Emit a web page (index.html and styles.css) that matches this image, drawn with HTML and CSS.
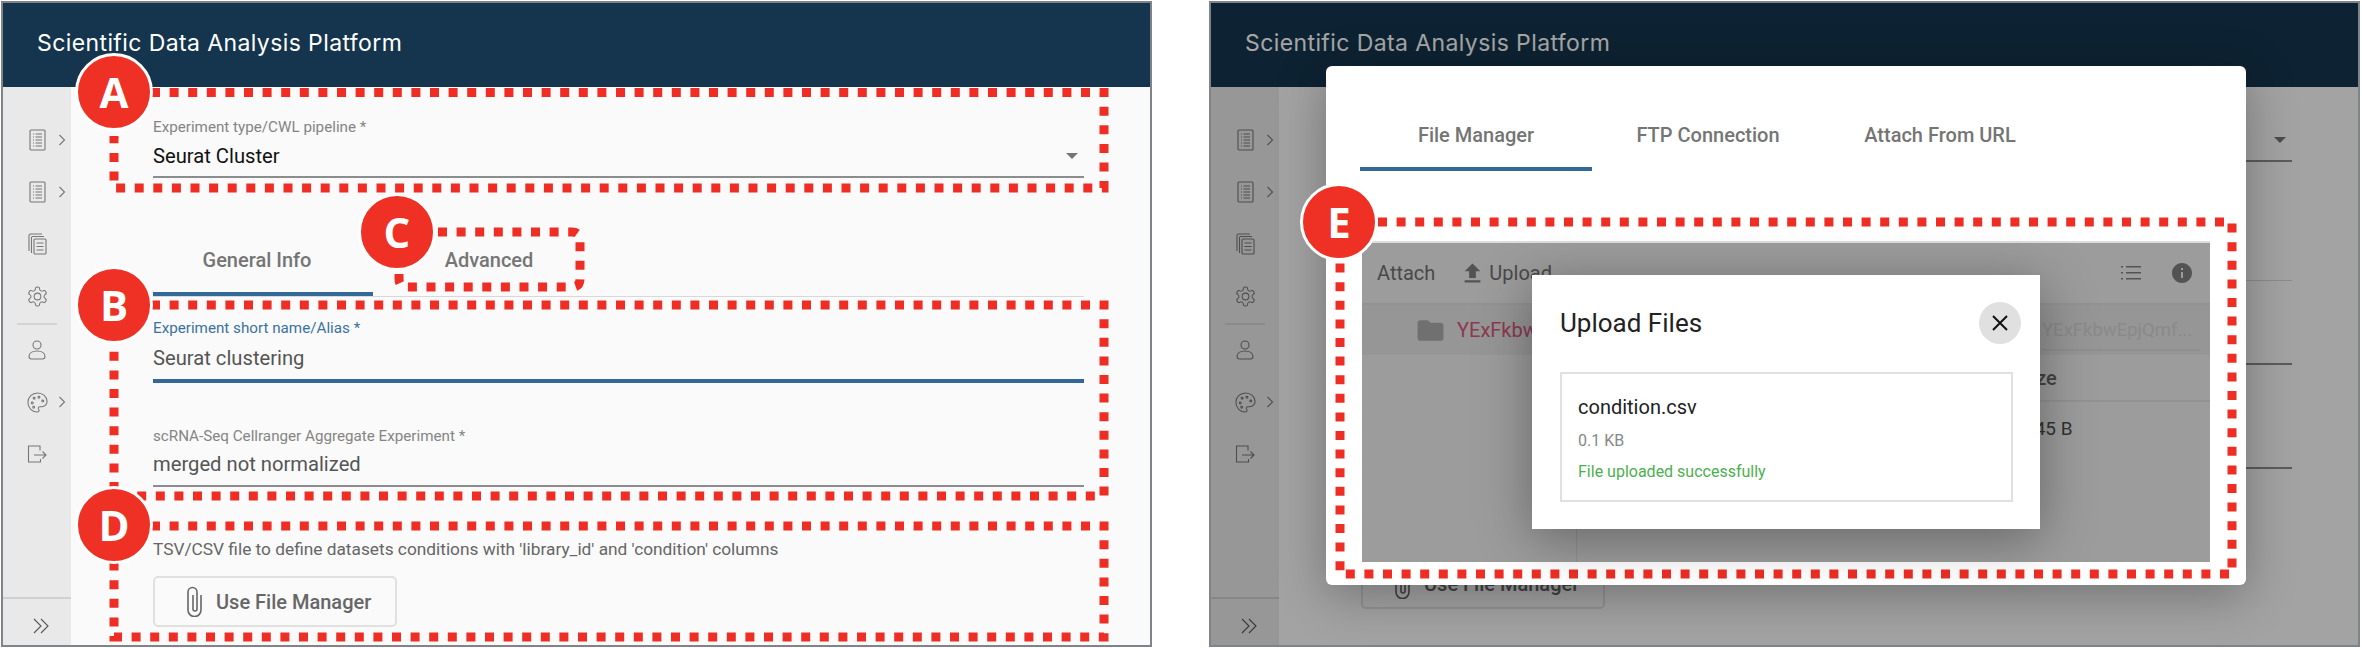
FILE: index.html
```html
<!DOCTYPE html>
<html lang="en">
<head>
  <meta charset="UTF-8">
  <title>Scientific Data Analysis Platform</title>
  <link rel="stylesheet" href="styles.css">
</head>
<body>

<!-- shared icons -->
<svg class="sprite" xmlns="http://www.w3.org/2000/svg">
  <symbol id="i-doc" viewBox="0 0 17 22">
    <rect x="1" y="1" width="15" height="20" rx="1"/>
    <path d="M4 5h1M4 8h1M4 11h1M4 14h1M4 17h1M6.500 5H13M6.500 8H13M6.500 11H13M6.500 14H13M6.500 17H13"/>
  </symbol>
  <symbol id="i-stack" viewBox="0 0 19 22">
    <path d="M1 18V2.500Q1 1 2.500 1H14"/>
    <path d="M3.500 20V4.500Q3.500 3.500 4.500 3.500H16"/>
    <rect x="6" y="6" width="12" height="15" rx="1"/>
    <path d="M8.500 10h7M8.500 13.500h7M8.500 17h7"/>
  </symbol>
  <symbol id="i-gear" viewBox="0 0 24 24">
    <path d="M12.220 2h-.44a2 2 0 0 0-2 2v.18a2 2 0 0 1-1 1.730l-.43.25a2 2 0 0 1-2 0l-.15-.08a2 2 0 0 0-2.730.73l-.22.38a2 2 0 0 0 .73 2.730l.15.1a2 2 0 0 1 1 1.720v.51a2 2 0 0 1-1 1.740l-.15.09a2 2 0 0 0-.73 2.730l.22.38a2 2 0 0 0 2.730.73l.15-.08a2 2 0 0 1 2 0l.43.25a2 2 0 0 1 1 1.730V20a2 2 0 0 0 2 2h.44a2 2 0 0 0 2-2v-.18a2 2 0 0 1 1-1.730l.43-.25a2 2 0 0 1 2 0l.15.08a2 2 0 0 0 2.730-.73l.22-.39a2 2 0 0 0-.73-2.730l-.15-.08a2 2 0 0 1-1-1.740v-.5a2 2 0 0 1 1-1.740l.15-.09a2 2 0 0 0 .73-2.730l-.22-.38a2 2 0 0 0-2.730-.73l-.15.08a2 2 0 0 1-2 0l-.43-.25a2 2 0 0 1-1-1.730V4a2 2 0 0 0-2-2z"/>
    <circle cx="12" cy="12" r="3.500"/>
  </symbol>
  <symbol id="i-person" viewBox="0 0 18 20">
    <circle cx="9" cy="5" r="4"/>
    <path d="M1 16.500C1 13 4.500 11 9 11s8 2 8 5.500Q17 19 14.500 19h-11Q1 19 1 16.500z"/>
  </symbol>
  <symbol id="i-palette" viewBox="0 0 24 24">
    <path d="M12 2C6.500 2 2 6.500 2 12s4.500 10 10 10c.926 0 1.648-.746 1.648-1.688 0-.437-.18-.835-.437-1.125-.29-.289-.438-.652-.438-1.125a1.640 1.640 0 0 1 1.668-1.668h1.996c3.051 0 5.555-2.503 5.555-5.554C21.965 6.012 17.461 2 12 2z"/>
    <circle cx="13.500" cy="6.500" r="1"/><circle cx="17.500" cy="10.500" r="1"/>
    <circle cx="8.500" cy="7.500" r="1"/><circle cx="6.500" cy="12.500" r="1"/>
    <circle cx="8" cy="17" r="1"/>
  </symbol>
  <symbol id="i-logout" viewBox="0 0 20 18">
    <path d="M13 5.500V1H1.500V17H13.500V14"/>
    <path d="M7 10H19M15.500 6.500L19 10l-3.500 3.500"/>
  </symbol>
  <symbol id="i-chev" viewBox="0 0 8 12"><path d="M1.500 1l5 5-5 5"/></symbol>
  <symbol id="i-double" viewBox="0 0 16 16"><path d="M1 1l7 7-7 7M8 1l7 7-7 7"/></symbol>
  <symbol id="i-clip" viewBox="0 0 17 31">
    <path d="M15 9v15a6.500 6.500 0 0 1-13 0V6a4.500 4.500 0 0 1 9 0v17a2 2 0 0 1-4 0V9"/>
  </symbol>
</svg>

<div class="screen">
  <header class="topbar">Scientific Data Analysis Platform</header>
  <div class="body">
    <nav class="sidebar">
      <a class="nav-item"><svg class="ico ico-doc"><use href="#i-doc"/></svg><svg class="chev"><use href="#i-chev"/></svg></a>
      <a class="nav-item"><svg class="ico ico-doc"><use href="#i-doc"/></svg><svg class="chev"><use href="#i-chev"/></svg></a>
      <a class="nav-item"><svg class="ico ico-stack"><use href="#i-stack"/></svg></a>
      <a class="nav-item"><svg class="ico ico-gear"><use href="#i-gear"/></svg></a>
      <div class="nav-divider"></div>
      <a class="nav-item"><svg class="ico ico-person"><use href="#i-person"/></svg></a>
      <a class="nav-item"><svg class="ico ico-gear"><use href="#i-palette"/></svg><svg class="chev"><use href="#i-chev"/></svg></a>
      <a class="nav-item"><svg class="ico ico-logout"><use href="#i-logout"/></svg></a>
      <div class="nav-footer"><svg class="double"><use href="#i-double"/></svg></div>
    </nav>
    <main class="main">
      <div class="field field-type">
        <label>Experiment type/CWL pipeline *</label>
        <div class="value value-dark">Seurat Cluster<span class="caret"></span></div>
      </div>
      <div class="tabs">
        <div class="tab active">General Info</div>
        <div class="tab">Advanced</div>
      </div>
      <div class="field field-alias focused">
        <label>Experiment short name/Alias *</label>
        <div class="value">Seurat clustering</div>
      </div>
      <div class="field field-exp">
        <label>scRNA-Seq Cellranger Aggregate Experiment *</label>
        <div class="value">merged not normalized</div>
      </div>
      <p class="hint">TSV/CSV file to define datasets conditions with 'library_id' and 'condition' columns</p>
      <button class="file-btn"><svg class="clip"><use href="#i-clip"/></svg>Use File Manager</button>
    </main>
  </div>
</div>

<div class="screen screen-dim">
  <header class="topbar">Scientific Data Analysis Platform</header>
  <div class="body">
    <nav class="sidebar">
      <a class="nav-item"><svg class="ico ico-doc"><use href="#i-doc"/></svg><svg class="chev"><use href="#i-chev"/></svg></a>
      <a class="nav-item"><svg class="ico ico-doc"><use href="#i-doc"/></svg><svg class="chev"><use href="#i-chev"/></svg></a>
      <a class="nav-item"><svg class="ico ico-stack"><use href="#i-stack"/></svg></a>
      <a class="nav-item"><svg class="ico ico-gear"><use href="#i-gear"/></svg></a>
      <div class="nav-divider"></div>
      <a class="nav-item"><svg class="ico ico-person"><use href="#i-person"/></svg></a>
      <a class="nav-item"><svg class="ico ico-gear"><use href="#i-palette"/></svg><svg class="chev"><use href="#i-chev"/></svg></a>
      <a class="nav-item"><svg class="ico ico-logout"><use href="#i-logout"/></svg></a>
      <div class="nav-footer"><svg class="double"><use href="#i-double"/></svg></div>
    </nav>
    <!-- the form texts here sit behind the modal, only the underlines and the button show -->
    <main class="main">
      <div class="field field-type">
        <label>&nbsp;</label>
        <div class="value value-dark">&nbsp;<span class="caret"></span></div>
      </div>
      <div class="tabs">
        <div class="tab">&nbsp;</div>
      </div>
      <div class="field field-alias">
        <label>&nbsp;</label>
        <div class="value">&nbsp;</div>
      </div>
      <div class="field field-exp">
        <label>&nbsp;</label>
        <div class="value">&nbsp;</div>
      </div>
      <p class="hint">&nbsp;</p>
      <button class="file-btn"><svg class="clip"><use href="#i-clip"/></svg>Use File Manager</button>
    </main>
  </div>

  <div class="backdrop"></div>

  <div class="modal">
    <div class="modal-tabs">
      <div class="tab active">File Manager</div>
      <div class="tab">FTP Connection</div>
      <div class="tab">Attach From URL</div>
    </div>
    <div class="manager">
      <div class="toolbar">
        <span class="tool-attach">Attach</span>
        <svg class="tool-upload" viewBox="0 0 24 24"><path d="M9 16h6v-6h4l-7-7-7 7h4zm-4 2h14v2H5z"/></svg>
        <span>Upload</span>
        <svg class="tool-list" viewBox="0 0 20 16"><path d="M0 1h2v1.500H0zM5 1h15v1.500H5zM0 7h2v1.500H0zM5 7h15v1.500H5zM0 13h2v1.500H0zM5 13h15v1.500H5z"/></svg>
        <svg class="tool-info" viewBox="2 2 20 20"><path d="M12 2C6.480 2 2 6.480 2 12s4.480 10 10 10 10-4.480 10-10S17.520 2 12 2zm1 15h-2v-6h2v6zm0-8h-2V7h2v2z"/></svg>
      </div>
      <div class="path-row">
        <svg class="folder" viewBox="0 0 24 24"><path d="M10 4H4c-1.100 0-1.990.9-1.990 2L2 18c0 1.100.9 2 2 2h16c1.100 0 2-.9 2-2V8c0-1.100-.9-2-2-2h-8l-2-2z"/></svg>
        <span class="folder-name">YExFkbw</span>
        <span class="path-text">YExFkbwEpjQmf...</span>
      </div>
      <div class="files">
        <div class="tree"></div>
        <div class="list">
          <div class="list-head"><span>Size</span></div>
          <div class="list-row"><span>145 B</span></div>
        </div>
      </div>

      <div class="upload-dialog">
        <div class="dialog-head">
          <h2>Upload Files</h2>
          <span class="close"><svg viewBox="0 0 18 18"><path d="M2 2l14 14M16 2L2 16"/></svg></span>
        </div>
        <div class="upload-card">
          <div class="file-name">condition.csv</div>
          <div class="file-size">0.1 KB</div>
          <div class="file-ok">File uploaded successfully</div>
        </div>
      </div>
    </div>
  </div>
</div>

<!-- red annotation layer -->
<svg class="marks" viewBox="0 0 2362 648" xmlns="http://www.w3.org/2000/svg">
  <path d="M151 92.500H1104V188H114V136"/>
  <path d="M438 232H572q8 0 8 8V279q0 8-8 8H407q-8 0-8-8V270"/>
  <path d="M151 305H1104V496H114V340"/>
  <path d="M151 526H1104V637H114V561"/>
  <path d="M1378 222H2232V574H1340V259"/>
</svg>
<div class="badge badge-a">A</div>
<div class="badge badge-b">B</div>
<div class="badge badge-c">C</div>
<div class="badge badge-d">D</div>
<div class="badge badge-e">E</div>

</body>
</html>
```

FILE: styles.css
```css
body {
  margin: 0;
  width: 2362px;
  height: 648px;
  padding: 1px;
  box-sizing: border-box;
  display: flex;
  gap: 57px;
  position: relative;
  overflow: hidden;
  background: #fff;
  font-family: Roboto, sans-serif;
}
.sprite {
  display: none;
}

/* screens */
.screen {
  position: relative;
  width: 1151px;
  height: 646px;
  box-sizing: border-box;
  border: 2px solid #808488;
  display: flex;
  flex-direction: column;
  overflow: hidden;
  flex: none;
}
.topbar {
  height: 84px;
  flex: none;
  box-sizing: border-box;
  padding: 27px 0 0 34px;
  background: #14354d;
  color: #fff;
  font-family: Inter, sans-serif;
  font-size: 23px;
  letter-spacing: 0.4px;
  line-height: 27px;
}
.body {
  flex: 1;
  display: flex;
  min-height: 0;
}

/* sidebar */
.sidebar {
  width: 68px;
  flex: none;
  box-sizing: border-box;
  padding-top: 27px;
  display: flex;
  flex-direction: column;
  background: #e9e9e9;
}
.nav-item {
  height: 52px;
  flex: none;
  position: relative;
  display: flex;
  align-items: center;
  justify-content: center;
}
.nav-item svg,
.double {
  fill: none;
  stroke: #777;
  stroke-width: 1.1;
}
.ico-doc {
  width: 17px;
  height: 22px;
}
.ico-stack {
  width: 19px;
  height: 22px;
}
.ico-gear {
  width: 23px;
  height: 23px;
}
.ico-person {
  width: 18px;
  height: 20px;
}
.ico-logout {
  width: 20px;
  height: 18px;
}
.nav-item .chev {
  position: absolute;
  left: 55px;
  top: 20px;
  width: 8px;
  height: 12px;
}
.nav-divider {
  height: 2px;
  flex: none;
  margin: 1px 14px -1px;
  background: #d4d4d4;
}
.nav-footer {
  margin-top: auto;
  height: 48px;
  box-sizing: border-box;
  flex: none;
  border-top: 2px solid #d0d0d0;
  padding: 19px 0 0 30px;
}
.double {
  display: block;
  width: 16px;
  height: 16px;
  stroke: #555;
}

/* form */
.main {
  flex: 1;
  box-sizing: border-box;
  padding: 31px 66px 0 82px;
  background: #fafafa;
}
.screen-dim .main {
  padding-top: 15px;
}
.field label {
  display: block;
  font-size: 15.200px;
  line-height: 18px;
  color: #858585;
}
.value {
  display: flex;
  justify-content: space-between;
  align-items: center;
  font-size: 20.200px;
  line-height: 28px;
  color: #555;
  padding-bottom: 7px;
  border-bottom: 2px solid #8c8c8c;
}
.value-dark {
  color: #111;
  margin-top: 6px;
  padding-bottom: 6px;
}
.caret {
  width: 0;
  height: 0;
  margin-right: 6px;
  border-left: 6.500px solid transparent;
  border-right: 6.500px solid transparent;
  border-top: 6px solid #757575;
}
.field-alias {
  margin-top: 22px;
}
.field-alias .value {
  margin-top: 7px;
}
.focused label {
  color: #3a729f;
}
.focused .value {
  border-bottom: 4px solid #33699a;
}
.field-exp {
  margin-top: 44px;
}
.field-exp .value {
  margin-top: 5px;
}
.hint {
  margin: 52px 0 0;
  font-size: 17.300px;
  line-height: 20px;
  color: #666;
}
.file-btn {
  display: flex;
  align-items: center;
  width: 244px;
  height: 51px;
  margin-top: 17px;
  padding: 0 0 0 31px;
  box-sizing: border-box;
  background: #fafafa;
  border: 2px solid #e0e0e0;
  border-radius: 5px;
  font-family: Roboto, sans-serif;
  font-size: 20px;
  font-weight: 500;
  color: #666;
}
.clip {
  width: 17px;
  height: 31px;
  margin-right: 13px;
  fill: none;
  stroke: #666;
  stroke-width: 1.600;
}

/* tabs */
.tabs {
  display: flex;
  height: 60px;
  margin-top: 59px;
  box-sizing: border-box;
  border-bottom: 1px solid #d8d8d8;
}
.tab {
  width: 232px;
  box-sizing: border-box;
  height: 59px;
  padding-top: 13px;
  text-align: center;
  font-size: 20px;
  font-weight: 500;
  line-height: 20px;
  color: #757575;
  border-bottom: 4px solid transparent;
}
.tabs .tab:first-child {
  width: 220px;
  padding-right: 12px;
}
.tab.active {
  border-bottom-color: #33699a;
}

/* modal */
.backdrop {
  position: absolute;
  top: 0;
  right: 0;
  bottom: 0;
  left: 0;
  background: rgba(0, 0, 0, 0.35);
}
.modal {
  position: absolute;
  left: 115px;
  top: 63px;
  width: 920px;
  height: 519px;
  background: #fff;
  border-radius: 6px;
  box-shadow: 0 10px 50px rgba(0, 0, 0, 0.3);
}
.modal-tabs {
  display: flex;
  padding-left: 34px;
}
.modal-tabs .tab {
  height: 105px;
  padding-top: 59px;
}
.manager {
  position: relative;
  width: 848px;
  height: 321px;
  margin: 70px 0 0 36px;
  background: #f0f0f0;
  border-top: 2px solid #ddd;
  box-sizing: border-box;
  font-size: 20px;
  color: #707070;
}
.manager::after {
  content: "";
  position: absolute;
  top: 0;
  right: 0;
  bottom: 0;
  left: 0;
  background: rgba(0, 0, 0, 0.35);
}
.toolbar {
  display: flex;
  align-items: center;
  height: 60px;
  padding-left: 15px;
  border-bottom: 2px solid #e0e0e0;
}
.toolbar svg {
  fill: #808080;
}
.tool-upload {
  width: 27px;
  height: 27px;
  margin: 0 3px 0 24px;
}
.tool-list {
  width: 20px;
  height: 16px;
  margin-left: auto;
}
.tool-info {
  width: 20px;
  height: 20px;
  margin: 0 18px 0 31px;
}
.path-row {
  display: flex;
  align-items: center;
  height: 50px;
  padding-left: 53px;
  background: #e6e6e6;
  box-sizing: border-box;
}
.folder {
  width: 31px;
  height: 31px;
  fill: #acacac;
}
.folder-name {
  margin-left: 11px;
  color: #d7597b;
}
.path-text {
  align-self: flex-start;
  width: 158px;
  margin: 13px 10px 0 auto;
  padding-bottom: 7px;
  font-size: 18.500px;
  line-height: 24px;
  color: #d4d4d4;
  border-bottom: 2px solid #dcdcdc;
}
.files {
  display: flex;
  height: 207px;
}
.tree {
  width: 214px;
  border-right: 1px solid #ddd;
}
.list {
  flex: 1;
}
.list-head {
  padding-left: 442px;
  height: 47px;
  line-height: 46px;
  font-weight: 500;
  color: #696969;
  border-bottom: 2px solid #e0e0e0;
  box-sizing: border-box;
}
.list-row {
  padding-left: 447px;
  line-height: 54px;
  font-size: 19px;
  color: #4f4f4f;
}

/* upload dialog */
.upload-dialog {
  position: absolute;
  z-index: 1;
  left: 170px;
  top: 32px;
  width: 508px;
  height: 254px;
  box-sizing: border-box;
  padding: 27px 19px 0 28px;
  background: #fff;
  box-shadow: 0 10px 50px rgba(0, 0, 0, 0.35);
}
.dialog-head {
  display: flex;
  justify-content: space-between;
  align-items: center;
  height: 42px;
}
.dialog-head h2 {
  margin: 0;
  font-size: 26px;
  font-weight: 400;
  color: #222;
}
.close {
  width: 42px;
  height: 42px;
  border-radius: 50%;
  background: #e0e0e0;
  display: flex;
  align-items: center;
  justify-content: center;
}
.close svg {
  width: 18px;
  height: 18px;
  fill: none;
  stroke: #111;
  stroke-width: 2;
}
.upload-card {
  width: 453px;
  height: 130px;
  margin-top: 28px;
  box-sizing: border-box;
  padding: 21px 0 0 16px;
  border: 2px solid #e0e0e0;
}
.file-name {
  font-size: 20px;
  line-height: 24px;
  color: #222;
}
.file-size {
  margin-top: 12px;
  font-size: 16px;
  line-height: 20px;
  color: #888;
}
.file-ok {
  margin-top: 11px;
  font-size: 16px;
  line-height: 20px;
  color: #4caf50;
}

/* annotations */
.marks {
  position: absolute;
  left: 0;
  top: 0;
  width: 2362px;
  height: 648px;
  fill: none;
  stroke: #ee2e24;
  stroke-width: 9;
  stroke-dasharray: 9 9.600;
}
.badge {
  position: absolute;
  width: 72px;
  height: 72px;
  box-sizing: content-box;
  border: 3px solid #fff;
  border-radius: 50%;
  background: #ee3124;
  color: #fff;
  font-family: "Open Sans", sans-serif;
  font-size: 42px;
  font-weight: 700;
  line-height: 72px;
  text-align: center;
}
.badge-a {
  left: 75px;
  top: 53px;
}
.badge-b {
  left: 75px;
  top: 266px;
}
.badge-c {
  left: 358px;
  top: 193px;
}
.badge-d {
  left: 75px;
  top: 486px;
}
.badge-e {
  left: 1300px;
  top: 183px;
}
```
